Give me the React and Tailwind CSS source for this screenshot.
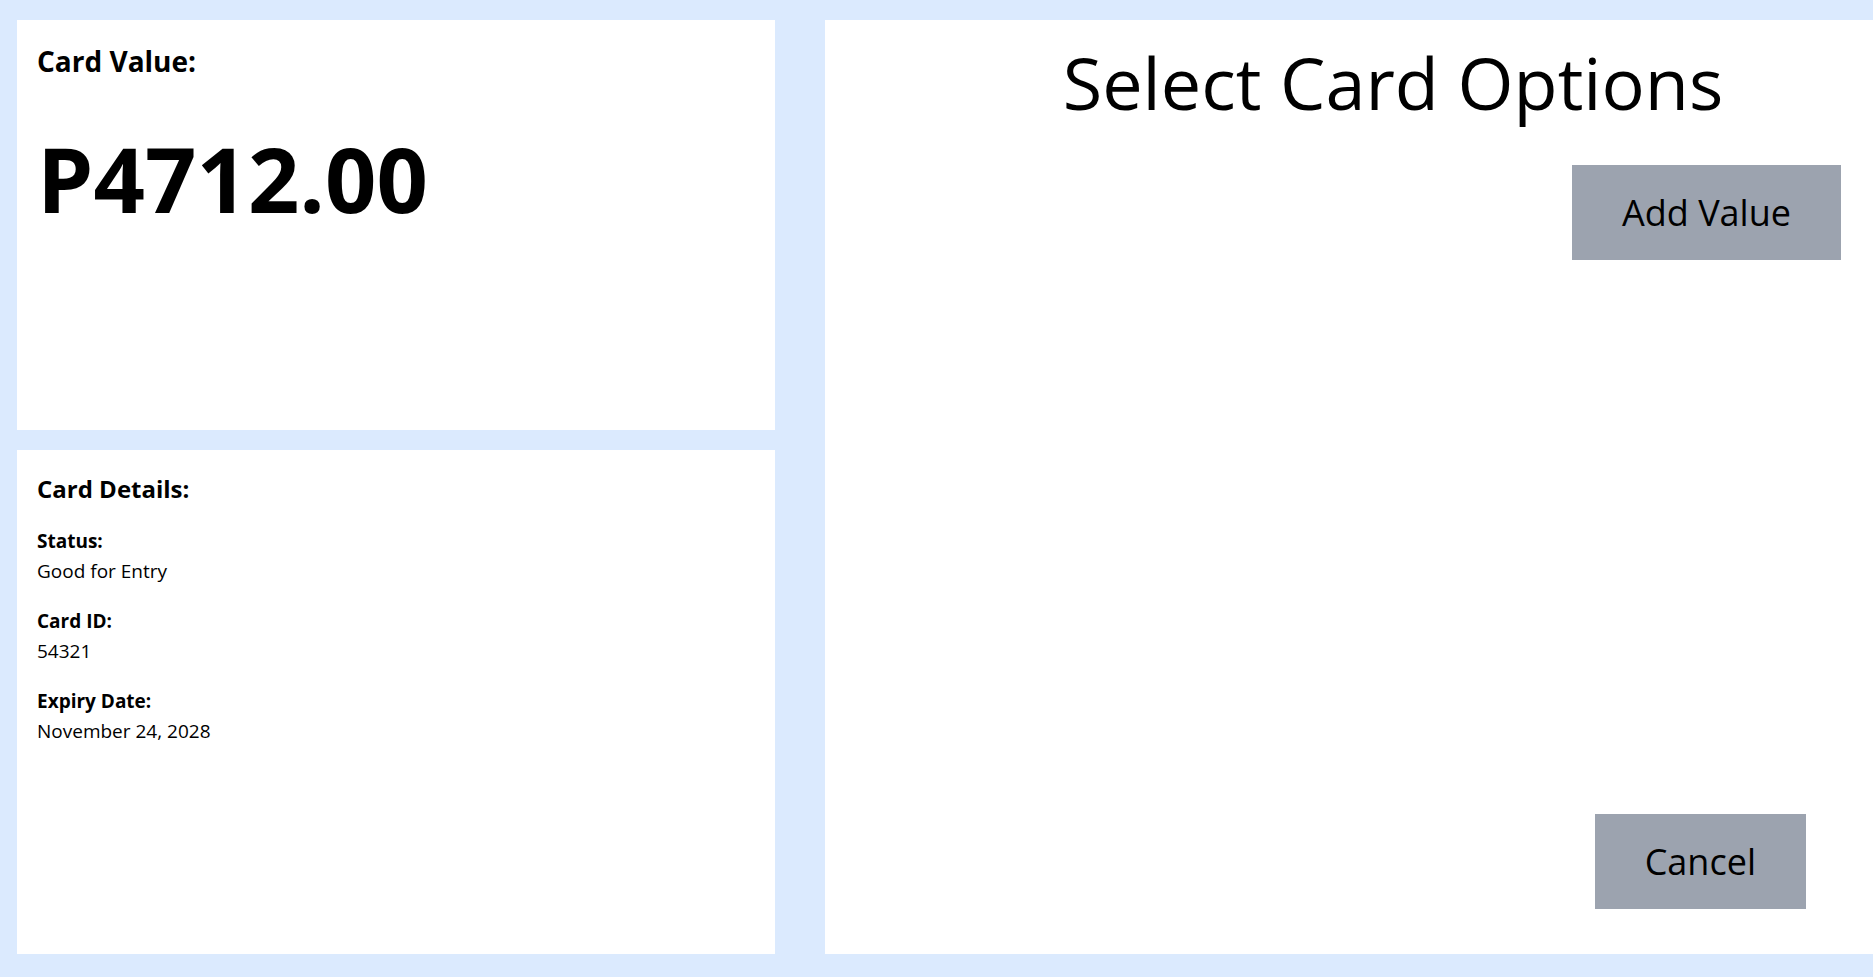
export default function App() {
  const details = [
    { label: 'Status:', value: 'Good for Entry' },
    { label: 'Card ID:', value: '54321' },
    { label: 'Expiry Date:', value: 'November 24, 2028' },
  ]

  return (
    <div className="flex h-screen w-screen gap-[50px] overflow-hidden bg-[#dbeafe] pb-[23px] pl-[17px] pt-5 font-['Open_Sans','Noto_Sans',sans-serif] text-black">
      {/* left column */}
      <div className="flex w-[758px] shrink-0 flex-col gap-5">
        <section className="h-[410px] bg-white px-5 pt-[23px]">
          <h2 className="text-[28px] font-bold leading-9">Card Value:</h2>
          <p className="mt-[54px] text-[90px] font-bold leading-none">P4712.00</p>
        </section>

        <section className="flex-1 bg-white px-5 pt-[23px]">
          <h2 className="text-2xl font-bold leading-8">Card Details:</h2>
          <div className="mt-[21px] flex flex-col gap-5">
            {details.map((d) => (
              <div key={d.label} className="text-[19px] leading-[30px]">
                <p className="font-bold">{d.label}</p>
                <p>{d.value}</p>
              </div>
            ))}
          </div>
        </section>
      </div>

      {/* right panel */}
      <section className="flex w-[1136px] shrink-0 flex-col bg-white pt-[26px] pb-[45px]">
        <h1 className="text-center text-7xl font-medium leading-none">Select Card Options</h1>
        <div className="mt-[47px] flex justify-end pr-[120px]">
          <button className="flex h-[95px] items-center bg-[#9ca3af] px-[50px] text-4xl font-medium">Add Value</button>
        </div>
        <div className="mt-auto flex justify-end pr-[155px]">
          <button className="flex h-[95px] items-center bg-[#9ca3af] px-[50px] text-4xl font-medium">Cancel</button>
        </div>
      </section>
    </div>
  )
}
